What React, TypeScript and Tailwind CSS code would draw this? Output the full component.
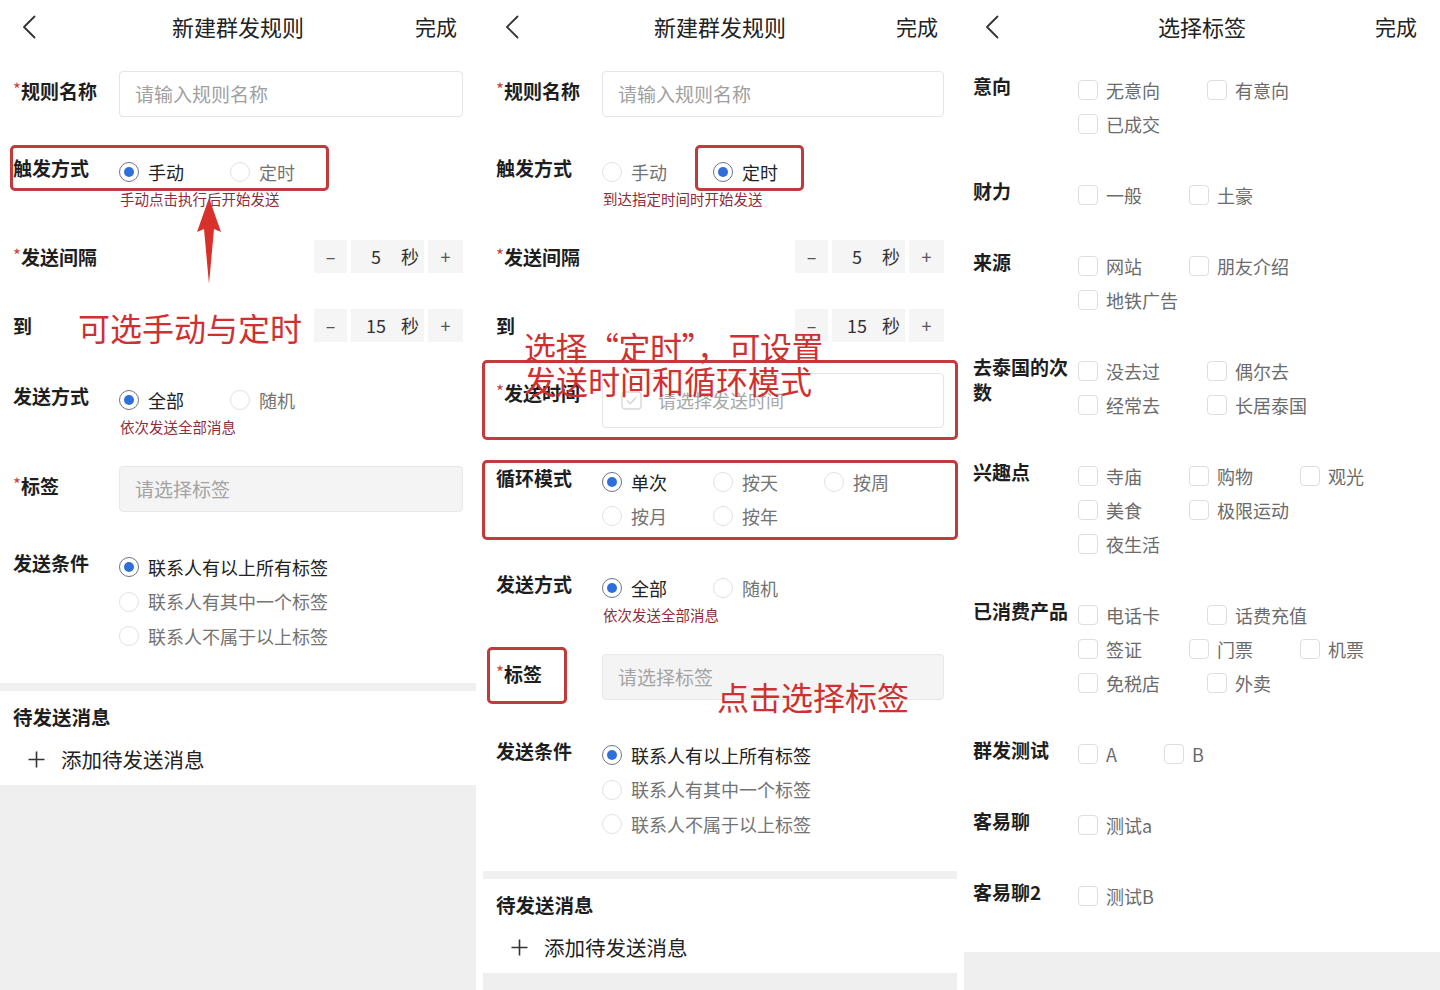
import React from 'react';

const Back = () => (
  <svg width="14" height="24" viewBox="0 0 14 24" fill="none">
    <path d="M12.5 1.5 L2 12 L12.5 22.5" stroke="#333" strokeWidth="1.8" strokeLinecap="round" strokeLinejoin="round" />
  </svg>
);

const Header = ({ title, right = 'pr-[19px]', left = 'pl-[22px]' }: { title: string; right?: string; left?: string }) => (
  <div className="h-[56px] shrink-0 flex items-center pb-[3px]">
    <div className={`w-[90px] ${left}`}>
      <Back />
    </div>
    <div className="flex-1 text-center text-[22px] text-[#222]">{title}</div>
    <div className={`w-[90px] text-right text-[21px] text-[#222] ${right}`}>完成</div>
  </div>
);

const Label = ({ children, req, className = '' }: { children: React.ReactNode; req?: boolean; className?: string }) => (
  <div className={`w-[106px] shrink-0 flex items-start text-[19px] font-bold leading-[24px] text-[#1e1e1e] ${className}`}>
    {req && <span className="text-[17px] leading-none font-normal text-[#c8463f] mt-[1px]">*</span>}
    <span>{children}</span>
  </div>
);

const Radio = ({ on }: { on?: boolean }) =>
  on ? (
    <span className="w-[20px] h-[20px] shrink-0 rounded-full border-[1.5px] border-[#6b7586] flex items-center justify-center">
      <span className="w-[10px] h-[10px] rounded-full bg-[#2f6fdb]" />
    </span>
  ) : (
    <span className="w-[20px] h-[20px] shrink-0 rounded-full border border-[#e2e2e2]" />
  );

const RadioOpt = ({ on, text, w = 'w-[111px]', h = 'h-[34px]' }: { on?: boolean; text: string; w?: string; h?: string }) => (
  <div className={`${h} ${w} flex items-center gap-[9px]`}>
    <Radio on={on} />
    <span className={`text-[18px] ${on ? 'text-[#222]' : 'text-[#737373]'}`}>{text}</span>
  </div>
);

const Stepper = ({ v }: { v: string }) => (
  <div className="flex gap-[4px] h-[33px] text-[18px] text-[#333]">
    <div className="w-[33px] bg-[#f5f5f5] flex items-center justify-center text-[#555]">–</div>
    <div className="w-[73px] bg-[#f5f5f5] flex items-center">
      <span className="w-[50px] text-center">{v}</span>
      <span>秒</span>
    </div>
    <div className="w-[35px] bg-[#f5f5f5] flex items-center justify-center text-[#555]">+</div>
  </div>
);

const Plus = () => (
  <svg width="17" height="17" viewBox="0 0 17 17">
    <path d="M8.5 0.5 V16.5 M0.5 8.5 H16.5" stroke="#333" strokeWidth="1.6" />
  </svg>
);

const Check = () => <span className="w-[20px] h-[20px] shrink-0 rounded-[4px] border border-[#dedede]" />;

const Calendar = () => (
  <svg width="21" height="19" viewBox="0 0 21 19" fill="none">
    <rect x="1" y="1" width="19" height="17" rx="3" stroke="#d6d6d6" strokeWidth="1.3" />
    <path d="M6 9.5 L9.2 12.7 L15 6.5" stroke="#d2d2d2" strokeWidth="1.3" />
  </svg>
);

const Box = ({ className }: { className: string }) => (
  <div className={`absolute border-[3px] border-[#c13a3c] rounded-[5px] ${className}`} />
);

const Note = ({ children, className }: { children: React.ReactNode; className: string }) => (
  <div className={`absolute text-[32px] leading-[34px] text-[#cf3030] whitespace-nowrap ${className}`}>{children}</div>
);

const Trigger = ({ timed }: { timed?: boolean }) => (
  <div className="flex px-[13px] mt-[38px]">
    <Label className="pt-[1px]">触发方式</Label>
    <div>
      <div className="flex">
        <RadioOpt on={!timed} text="手动" />
        <RadioOpt on={timed} text="定时" />
      </div>
      <div className="h-[20px] leading-[20px] text-[14.5px] text-[#8e2c3a] pl-px">
        {timed ? '到达指定时间时开始发送' : '手动点击执行后开始发送'}
      </div>
    </div>
  </div>
);

const Interval = () => (
  <>
    <div className="flex items-center justify-between px-[13px] mt-[31px]">
      <Label req>发送间隔</Label>
      <Stepper v="5" />
    </div>
    <div className="flex items-center justify-between px-[13px] mt-[36px]">
      <Label>到</Label>
      <Stepper v="15" />
    </div>
  </>
);

const Rest = ({ modeTop }: { modeTop: string }) => (
  <>
    <div className={`flex px-[13px] ${modeTop}`}>
      <Label className="pt-[1px]">发送方式</Label>
      <div>
        <div className="flex">
          <RadioOpt on text="全部" />
          <RadioOpt text="随机" />
        </div>
        <div className="h-[20px] leading-[20px] text-[14.5px] text-[#8e2c3a] pl-px">依次发送全部消息</div>
      </div>
    </div>
    <div className="flex px-[13px] mt-[29px]">
      <Label req className="pt-[8px]">标签</Label>
      <div className="flex-1 h-[46px] bg-[#f4f4f4] border border-[#e8e8e8] rounded-[4px] flex items-center pl-[15px] text-[19px] text-[#a3a3a3]">
        请选择标签
      </div>
    </div>
    <div className="flex px-[13px] mt-[38px]">
      <Label className="pt-[1px]">发送条件</Label>
      <div className="flex flex-col">
        <RadioOpt on text="联系人有以上所有标签" w="w-auto" h="h-[34.5px]" />
        <RadioOpt text="联系人有其中一个标签" w="w-auto" h="h-[34.5px]" />
        <RadioOpt text="联系人不属于以上标签" w="w-auto" h="h-[34.5px]" />
      </div>
    </div>
    <div className="mt-[29.5px] h-[8px] bg-[#f0f0f0]" />
    <div className="pt-[14px] pb-[12px] px-[13px]">
      <div className="text-[19.5px] font-bold leading-[24px] text-[#1e1e1e]">待发送消息</div>
      <div className="mt-[16px] h-[28px] flex items-center pl-[15px] text-[20.5px] text-[#222]">
        <Plus />
        <span className="ml-[16px]">添加待发送消息</span>
      </div>
    </div>
    <div className="flex-1 bg-[#efefef]" />
  </>
);

const RuleName = () => (
  <div className="flex px-[13px] mt-[15px]">
    <Label req className="pt-[8px]">规则名称</Label>
    <div className="flex-1 h-[46px] border border-[#e5e5e5] rounded-[4px] flex items-center pl-[15px] text-[19px] text-[#a0a0a0]">
      请输入规则名称
    </div>
  </div>
);

const groups: { label: string; items: string[] }[] = [
  { label: '意向', items: ['无意向', '有意向', '已成交'] },
  { label: '财力', items: ['一般', '土豪'] },
  { label: '来源', items: ['网站', '朋友介绍', '地铁广告'] },
  { label: '去泰国的次数', items: ['没去过', '偶尔去', '经常去', '长居泰国'] },
  { label: '兴趣点', items: ['寺庙', '购物', '观光', '美食', '极限运动', '夜生活'] },
  { label: '已消费产品', items: ['电话卡', '话费充值', '签证', '门票', '机票', '免税店', '外卖'] },
  { label: '群发测试', items: ['A', 'B'] },
  { label: '客易聊', items: ['测试a'] },
  { label: '客易聊2', items: ['测试B'] },
];

export default function App() {
  return (
    <div className="w-[1440px] h-[990px] flex gap-[7px] bg-white overflow-hidden font-['Noto_Sans_CJK_SC','Noto_Sans',sans-serif]">
      {/* panel 1: manual trigger */}
      <div className="relative w-[476px] h-[990px] shrink-0 flex flex-col bg-white">
        <Header title="新建群发规则" />
        <RuleName />
        <Trigger />
        <Interval />
        <Rest modeTop="mt-[41px]" />

        <Box className="left-[10px] top-[145px] w-[319px] h-[46px]" />
        <svg className="absolute left-[195px] top-[196px]" width="28" height="90" viewBox="0 0 28 90">
          <path d="M14 2 L26 36 L19 33 L14 88 L9 33 L2 36 Z" fill="#d8302a" />
        </svg>
        <Note className="left-[78px] top-[310px]">可选手动与定时</Note>
      </div>

      {/* panel 2: timed trigger */}
      <div className="relative w-[474px] h-[990px] shrink-0 flex flex-col bg-white">
        <Header title="新建群发规则" />
        <RuleName />
        <Trigger timed />
        <Interval />
        <div className="flex px-[13px] mt-[31px]">
          <Label req className="pt-[8px]">发送时间</Label>
          <div className="flex-1 h-[55px] border border-[#e5e5e5] rounded-[4px] flex items-center pl-[18px] text-[18px] text-[#a8a8a8]">
            <Calendar />
            <span className="ml-[16px]">请选择发送时间</span>
          </div>
        </div>
        <div className="flex px-[13px] mt-[37px]">
          <Label className="pt-[1px]">循环模式</Label>
          <div className="flex flex-wrap w-[343px]">
            <RadioOpt on text="单次" />
            <RadioOpt text="按天" />
            <RadioOpt text="按周" />
            <RadioOpt text="按月" />
            <RadioOpt text="按年" />
          </div>
        </div>
        <Rest modeTop="mt-[38px]" />

        <Box className="left-[212px] top-[145px] w-[109px] h-[46px]" />
        <Box className="left-[-1px] top-[360px] w-[476px] h-[80px]" />
        <Box className="left-[-1px] top-[460px] w-[476px] h-[80px]" />
        <Box className="left-[4px] top-[647px] w-[80px] h-[57px]" />
        <Note className="left-[41px] top-[329px]">
          <div className="tracking-[-0.5px]">选择“定时”，可设置</div>
          <div>发送时间和循环模式</div>
        </Note>
        <Note className="left-[234px] top-[679px]">点击选择标签</Note>
      </div>

      {/* panel 3: tag picker */}
      <div className="relative w-[476px] h-[990px] shrink-0 flex flex-col bg-white">
        <Header title="选择标签" left="pl-[21px]" right="pr-[23px]" />
        {groups.map((g, i) => (
          <div key={g.label} className={`flex pl-[9px] ${i === 0 ? 'mt-[17px]' : 'mt-[37px]'}`}>
            <div className="w-[105px] shrink-0 pr-[4px] text-[19px] font-bold leading-[25px] text-[#1e1e1e]">{g.label}</div>
            <div className="w-[327px] flex flex-wrap gap-x-[47px]">
              {g.items.map((t) => (
                <div key={t} className="h-[34px] flex items-center gap-[8px]">
                  <Check />
                  <span className="text-[18px] text-[#6b6b6b]">{t}</span>
                </div>
              ))}
            </div>
          </div>
        ))}
        <div className="mt-[39px] flex-1 bg-[#efefef]" />
      </div>
    </div>
  );
}
